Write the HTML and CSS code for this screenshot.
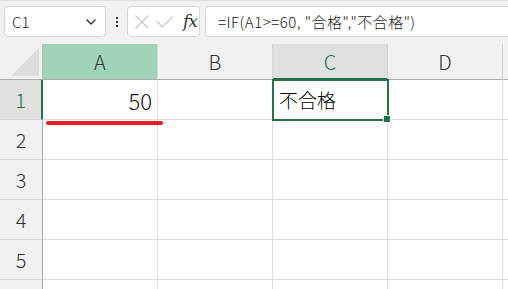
FILE: index.html
```html
<!DOCTYPE html>
<html>
<head>
<meta charset="utf-8">
<link rel="stylesheet" href="styles.css">
</head>
<body>
<div class="app">
  <div class="toolbar">
    <div class="namebox">
      <span class="name">C1</span>
      <svg class="chev" width="12" height="8" viewBox="0 0 12 8"><path d="M1.5 1.5 L6 6 L10.5 1.5" fill="none" stroke="#333" stroke-width="1.3"/></svg>
    </div>
    <div class="dots"><i></i><i></i><i></i></div>
    <div class="fxbox">
      <svg class="ico-x" width="16" height="16" viewBox="0 0 16 16"><path d="M1.5 1.5 L14.5 14.5 M14.5 1.5 L1.5 14.5" stroke="#c8c8c8" stroke-width="1.2" fill="none"/></svg>
      <svg class="ico-ok" width="18" height="14" viewBox="0 0 18 14"><path d="M1 6.5 L6.5 12 L17 1.5" stroke="#c8c8c8" stroke-width="1.2" fill="none"/></svg>
      <span class="fx">fx</span>
    </div>
    <div class="formula">=IF(A1&gt;=60, "合格","不合格")</div>
  </div>
  <div class="sheet">
    <div class="cell corner"><span class="tri"></span></div>
    <div class="cell colh sel-a">A</div>
    <div class="cell colh">B</div>
    <div class="cell colh sel-c">C</div>
    <div class="cell colh">D</div>
    <div class="cell colh last"></div>

    <div class="cell rowh sel-r">1</div>
    <div class="cell num">50</div>
    <div class="cell"></div>
    <div class="cell active">不合格<span class="handle"></span></div>
    <div class="cell"></div>
    <div class="cell last"></div>

    <div class="cell rowh">2</div>
    <div class="cell"></div><div class="cell"></div><div class="cell"></div><div class="cell"></div><div class="cell last"></div>
    <div class="cell rowh">3</div>
    <div class="cell"></div><div class="cell"></div><div class="cell"></div><div class="cell"></div><div class="cell last"></div>
    <div class="cell rowh">4</div>
    <div class="cell"></div><div class="cell"></div><div class="cell"></div><div class="cell"></div><div class="cell last"></div>
    <div class="cell rowh">5</div>
    <div class="cell"></div><div class="cell"></div><div class="cell"></div><div class="cell"></div><div class="cell last"></div>
    <div class="cell rowh"></div>
    <div class="cell"></div><div class="cell"></div><div class="cell"></div><div class="cell"></div><div class="cell last"></div>
    <span class="redline"></span>
  </div>
</div>
</body>
</html>
```
FILE: styles.css
```css
* { box-sizing: border-box; }
html, body { margin: 0; padding: 0; }
body {
  width: 508px; height: 289px; overflow: hidden; background: #fff;
  font-family: "Noto Sans CJK JP", "Noto Sans", sans-serif; color: #222;
}
.app { width: 508px; height: 289px; overflow: hidden; }
.toolbar {
  height: 44px; background: #f1f1f1; border-top: 1px solid #e2e2e2;
  display: flex; align-items: flex-start; padding: 5px 0 0 4px;
}
.namebox {
  width: 102px; height: 31px; background: #fff; border: 1px solid #d6d6d6;
  border-radius: 4px; display: flex; align-items: center; justify-content: space-between;
  padding: 0 8px 0 7px;
}
.name { font-size: 15px; color: #222; font-weight: 300; }
.chev { margin-top: 1px; }
.dots { width: 21px; height: 31px; display: flex; flex-direction: column; align-items: center; justify-content: center; gap: 2px; }
.dots i { display: block; width: 2px; height: 2px; background: #333; }
.fxbox {
  width: 73px; height: 31px; background: #fff; border: 1px solid #d6d6d6; border-radius: 4px;
  display: flex; align-items: center; padding: 0 0 0 6px;
}
.ico-ok { margin-left: 6px; }
.fx { font-family: "DejaVu Serif", "Liberation Serif", serif; font-style: italic; font-size: 17px; color: #333; margin-left: 9px; letter-spacing: -1px; line-height: 1; }
.formula {
  flex: 1; height: 31px; margin-left: 5px; background: #fff; border: 1px solid #d6d6d6;
  border-right: none; border-radius: 4px 0 0 4px; font-size: 15px; line-height: 29px; padding-left: 12px; color: #222;
  white-space: nowrap; font-weight: 300; letter-spacing: 0.5px;
}
.sheet {
  position: relative;
  display: grid;
  grid-template-columns: 43px 115px 115px 115px 115px 30px;
  grid-template-rows: 36px 40px 40px 40px 40px 40px 40px;
}
.cell {
  border-right: 1px solid #dadada; border-bottom: 1px solid #dadada;
  font-size: 20px; display: flex; align-items: center; position: relative; font-weight: 300;
}
.corner { background: #f1f1f1; border-right: 1px solid #bdbdbd; border-bottom: 1px solid #aaa; }
.tri {
  position: absolute; right: 3px; bottom: 3px; width: 0; height: 0;
  border-left: 28px solid transparent; border-bottom: 28px solid #dcdcdc;
}
.colh {
  background: #f1f1f1; justify-content: center; border-right: 1px solid #d4d4d4; border-bottom: 1px solid #aaa;
  color: #333; font-size: 20px;
}
.colh.sel-a { background: #a0d4b8; }
.colh.sel-c { background: #e0e0e0; color: #217346; border-bottom: 2px solid #217346; }
.colh.last { border-right: none; }
.rowh {
  background: #f1f1f1; justify-content: center; border-right: 1px solid #aaa; border-bottom: 1px solid #d4d4d4;
  color: #333; font-size: 20px;
}
.rowh.sel-r { background: #e0e0e0; color: #217346; border-right: 2px solid #217346; }
.num { justify-content: flex-end; padding-right: 5px; font-size: 22px; color: #111; }
.active {
  outline: 2px solid #217346; outline-offset: -1px; padding-left: 6px; font-size: 19px; color: #000; z-index: 2;
}
.handle {
  position: absolute; right: -3px; bottom: -3px; width: 6px; height: 6px; background: #217346; border: 1px solid #fff; box-sizing: content-box;
  margin: -1px;
}
.last { border-right: none; }
.redline {
  position: absolute; left: 46px; top: 77px; width: 117px; height: 4px; background: #e81c24; border-radius: 2px; z-index: 3;
}
```
